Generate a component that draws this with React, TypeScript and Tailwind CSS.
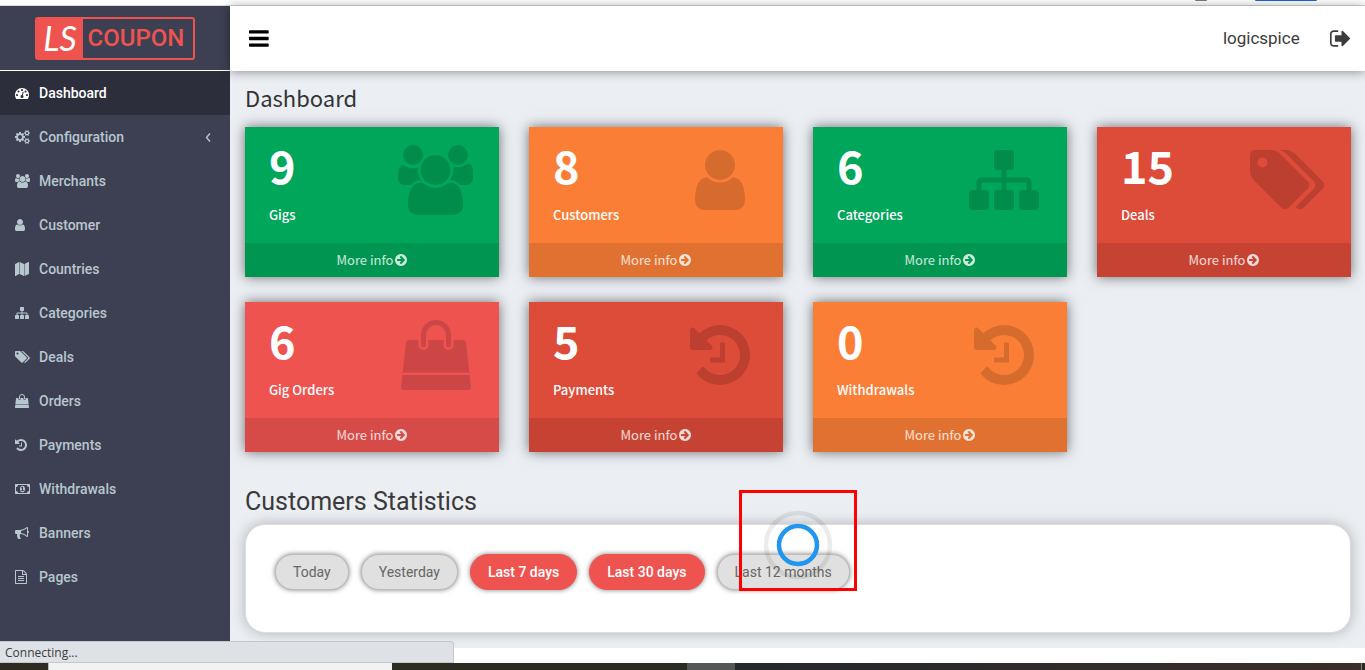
import React from "react";

type Glyph = { box: string; w: number; d: string };

const glyphs = {
  bars: {
    box: "128 0 1536 1792",
    w: 1536,
    d: "M1664 1344v128q0 26-19 45t-45 19h-1408q-26 0-45-19t-19-45v-128q0-26 19-45t45-19h1408q26 0 45 19t19 45zm0-512v128q0 26-19 45t-45 19h-1408q-26 0-45-19t-19-45v-128q0-26 19-45t45-19h1408q26 0 45 19t19 45zm0-512v128q0 26-19 45t-45 19h-1408q-26 0-45-19t-19-45v-128q0-26 19-45t45-19h1408q26 0 45 19t19 45z",
  },
  signOut: {
    box: "64 0 1664 1792",
    w: 1664,
    d: "M704 1440q0 4 1 20t.5 26.5-3 23.5-10 19.5-20.5 6.5h-320q-119 0-203.5-84.5t-84.5-203.5v-704q0-119 84.5-203.5t203.5-84.5h320q13 0 22.5 9.5t9.5 22.5q0 4 1 20t.5 26.5-3 23.5-10 19.5-20.5 6.5h-320q-66 0-113 47t-47 113v704q0 66 47 113t113 47h312l11.5 1 11.5 3 8 5.5 7 9 2 13.5zm928-544q0 26-19 45l-544 544q-19 19-45 19t-45-19-19-45v-288h-448q-26 0-45-19t-19-45v-384q0-26 19-45t45-19h448v-288q0-26 19-45t45-19 45 19l544 544q19 19 19 45z",
  },
  gauge: {
    box: "0 0 1792 1792",
    w: 1792,
    d: "M384 1152q0-53-37.5-90.5t-90.5-37.5-90.5 37.5-37.5 90.5 37.5 90.5 90.5 37.5 90.5-37.5 37.5-90.5zm192-448q0-53-37.5-90.5t-90.5-37.5-90.5 37.5-37.5 90.5 37.5 90.5 90.5 37.5 90.5-37.5 37.5-90.5zm428 481l101-382q6-26-7.5-48.5t-38.5-29.5-48 6.5-30 39.5l-101 382q-60 5-107 43.5t-63 98.5q-20 77 20 146t117 89 146-20 89-117q16-60-6-117t-72-91zm660-33q0-53-37.5-90.5t-90.5-37.5-90.5 37.5-37.5 90.5 37.5 90.5 90.5 37.5 90.5-37.5 37.5-90.5zm-640-640q0-53-37.5-90.5t-90.5-37.5-90.5 37.5-37.5 90.5 37.5 90.5 90.5 37.5 90.5-37.5 37.5-90.5zm448 192q0-53-37.5-90.5t-90.5-37.5-90.5 37.5-37.5 90.5 37.5 90.5 90.5 37.5 90.5-37.5 37.5-90.5zm320 448q0 261-141 483-19 29-54 29h-1402q-35 0-54-29-141-221-141-483 0-182 71-348t191-286 286-191 348-71 348 71 286 191 191 286 71 348z",
  },
  cogs: {
    box: "-64 0 1920 1792",
    w: 1920,
    d: "M832 896q0-106-75-181t-181-75-181 75-75 181 75 181 181 75 181-75 75-181zm768 512q0-52-38-90t-90-38-90 38-38 90q0 53 37.5 90.5t90.5 37.5 90.5-37.5 37.5-90.5zm0-1024q0-52-38-90t-90-38-90 38-38 90q0 53 37.5 90.5t90.5 37.5 90.5-37.5 37.5-90.5zm-384 421v185q0 10-7 19.5t-16 10.5l-155 24q-11 35-32 76 34 48 90 115 7 11 7 20 0 12-7 19-23 30-82.5 89.5t-78.5 59.5q-11 0-21-7l-115-90q-37 19-77 31-11 108-23 155-7 24-30 24h-186q-11 0-20-7.5t-10-17.5l-23-153q-34-10-75-31l-118 89q-7 7-20 7-11 0-21-8-144-133-144-160 0-9 7-19 10-14 41-53t47-61q-23-44-35-82l-152-24q-10-1-17-9.5t-7-19.5v-185q0-10 7-19.5t16-10.5l155-24q11-35 32-76-34-48-90-115-7-11-7-20 0-12 7-20 22-30 82-89t79-59q11 0 21 7l115 90q34-18 77-32 11-108 23-154 7-24 30-24h186q11 0 20 7.5t10 17.5l23 153q34 10 75 31l118-89q8-7 20-7 11 0 21 8 144 133 144 160 0 8-7 19-12 16-42 54t-45 60q23 48 34 82l152 23q10 2 17 10.5t7 19.5zm640 533v140q0 16-149 31-12 27-30 52 51 113 51 138 0 4-4 7-122 71-124 71-8 0-46-47t-52-68q-20 2-30 2t-30-2q-14 21-52 68t-46 47q-2 0-124-71-4-3-4-7 0-25 51-138-18-25-30-52-149-15-149-31v-140q0-16 149-31 13-29 30-52-51-113-51-138 0-4 4-7 4-2 35-20t59-34 30-16q8 0 46 46.5t52 67.5q20-2 30-2t30 2q51-71 92-112l6-2q4 0 124 70 4 3 4 7 0 25-51 138 17 23 30 52 149 15 149 31zm0-1024v140q0 16-149 31-12 27-30 52 51 113 51 138 0 4-4 7-122 71-124 71-8 0-46-47t-52-68q-20 2-30 2t-30-2q-14 21-52 68t-46 47q-2 0-124-71-4-3-4-7 0-25 51-138-18-25-30-52-149-15-149-31v-140q0-16 149-31 13-29 30-52-51-113-51-138 0-4 4-7 4-2 35-20t59-34 30-16q8 0 46 46.5t52 67.5q20-2 30-2t30 2q51-71 92-112l6-2q4 0 124 70 4 3 4 7 0 25-51 138 17 23 30 52 149 15 149 31z",
  },
  users: {
    box: "-64 0 1920 1792",
    w: 1920,
    d: "M529 896q-162 5-265 128h-134q-82 0-138-40.5t-56-118.5q0-353 124-353 6 0 43.5 21t97.5 42.5 119 21.5q67 0 133-23-5 37-5 66 0 159 93 287zm1071 637q0 120-73 189.5t-194 69.5h-874q-121 0-194-69.5t-73-189.5q0-53 3.5-103.5t14-109 26.5-108.5 43-97.5 62-81 85.5-53.5 111.5-20q10 0 43 21.5t73 48 107 48 135 21.5 135-21.5 107-48 73-48 43-21.5q61 0 111.5 20t85.5 53.5 62 81 43 97.5 26.5 108.5 14 109 3.5 103.5zm-1024-1277q0 106-75 181t-181 75-181-75-75-181 75-181 181-75 181 75 75 181zm704 384q0 159-112.5 271.5t-271.5 112.5-271.5-112.5-112.5-271.5 112.5-271.5 271.5-112.5 271.5 112.5 112.5 271.5zm576 225q0 78-56 118.5t-138 40.5h-134q-103-123-265-128 93-128 93-287 0-29-5-66 66 23 133 23 59 0 119-21.5t97.5-42.5 43.5-21q124 0 124 353zm-128-609q0 106-75 181t-181 75-181-75-75-181 75-181 181-75 181 75 75 181z",
  },
  user: {
    box: "256 0 1280 1792",
    w: 1280,
    d: "M1536 1399q0 109-62.5 187t-150.5 78h-854q-88 0-150.5-78t-62.5-187q0-85 8.5-160.5t31.5-152 58.5-131 94-89 134.5-34.5q131 128 313 128t313-128q76 0 134.5 34.5t94 89 58.5 131 31.5 152 8.5 160.5zm-256-887q0 159-112.5 271.5t-271.5 112.5-271.5-112.5-112.5-271.5 112.5-271.5 271.5-112.5 271.5 112.5 112.5 271.5z",
  },
  map: {
    box: "0 0 1792 1792",
    w: 1792,
    d: "M512 0v1536l-426 250q-36 14-62 0t-24-58v-1408q0-40 32-60zM576 0l576 256v1536l-576-256zM1706 6q36-14 62 0t24 58v1408q0 40-32 60l-544 260v-1536z",
  },
  sitemap: {
    box: "0 0 1792 1792",
    w: 1792,
    d: "M1792 1248v320q0 40-28 68t-68 28h-320q-40 0-68-28t-28-68v-320q0-40 28-68t68-28h96v-192h-512v192h96q40 0 68 28t28 68v320q0 40-28 68t-68 28h-320q-40 0-68-28t-28-68v-320q0-40 28-68t68-28h96v-192h-512v192h96q40 0 68 28t28 68v320q0 40-28 68t-68 28h-320q-40 0-68-28t-28-68v-320q0-40 28-68t68-28h96v-192q0-52 38-90t90-38h512v-192h-96q-40 0-68-28t-28-68v-320q0-40 28-68t68-28h320q40 0 68 28t28 68v320q0 40-28 68t-68 28h-96v192h512q52 0 90 38t38 90v192h96q40 0 68 28t28 68z",
  },
  tags: {
    box: "-64 0 1920 1792",
    w: 1920,
    d: "M384 448q0-53-37.5-90.5t-90.5-37.5-90.5 37.5-37.5 90.5 37.5 90.5 90.5 37.5 90.5-37.5 37.5-90.5zm1067 576q0 53-37 90l-491 492q-39 37-91 37-53 0-90-37l-715-716q-38-37-64.5-101t-26.5-117v-416q0-52 38-90t90-38h416q53 0 117 26.5t102 64.5l715 714q37 39 37 91zm384 0q0 53-37 90l-491 492q-39 37-91 37-36 0-59-14t-53-45l470-470q37-37 37-90 0-52-37-91l-715-714q-38-38-102-64.5t-117-26.5h224q53 0 117 26.5t102 64.5l715 714q37 39 37 91z",
  },
  bag: {
    box: "0 0 1792 1792",
    w: 1792,
    d: "M1757 1408l35 313q3 28-16 50-19 21-48 21h-1664q-29 0-48-21-19-22-16-50l35-313h1722zm-93-839l86 775h-1708l86-775q3-24 21-40.5t43-16.5h256v128q0 53 37.5 90.5t90.5 37.5 90.5-37.5 37.5-90.5v-128h384v128q0 53 37.5 90.5t90.5 37.5 90.5-37.5 37.5-90.5v-128h256q25 0 43 16.5t21 40.5zm-384-185v256q0 26-19 45t-45 19-45-19-19-45v-256q0-106-75-181t-181-75-181 75-75 181v256q0 26-19 45t-45 19-45-19-19-45v-256q0-159 112.5-271.5t271.5-112.5 271.5 112.5 112.5 271.5z",
  },
  history: {
    box: "128 0 1536 1792",
    w: 1536,
    d: "M1664 896q0 156-61 298t-164 245-245 164-298 61q-172 0-327-72.5t-264-204.5q-7-10-6.5-22.5t8.5-20.5l137-138q10-9 25-9 16 2 23 12 73 95 179 147t225 52q104 0 198.5-40.5t163.5-109.5 109.5-163.5 40.5-198.5-40.5-198.5-109.5-163.5-163.5-109.5-198.5-40.5q-98 0-188 35.5t-160 101.5l137 138q31 30 14 69-17 40-59 40h-448q-26 0-45-19t-19-45v-448q0-42 40-59 39-17 69 14l130 129q107-101 244.5-156.5t284.5-55.5q156 0 298 61t245 164 164 245 61 298zm-640-288v448q0 14-9 23t-23 9h-320q-14 0-23-9t-9-23v-64q0-14 9-23t23-9h224v-352q0-14 9-23t23-9h64q14 0 23 9t9 23z",
  },
  money: {
    box: "-64 0 1920 1792",
    w: 1920,
    d: "M704 1152h384v-96h-128v-448h-114l-148 137 77 80q42-37 55-57h2v288h-128v96zm512-256q0 70-21 142t-59.5 134-101.5 101-138 39-138-39-101.5-101-59.5-134-21-142 21-142 59.5-134 101.5-101 138-39 138 39 101.5 101 59.5 134 21 142zm512 256v-512q-106 0-181-75t-75-181h-1152q0 106-75 181t-181 75v512q106 0 181 75t75 181h1152q0-106 75-181t181-75zm128-832v1152q0 26-19 45t-45 19h-1792q-26 0-45-19t-19-45v-1152q0-26 19-45t45-19h1792q26 0 45 19t19 45z",
  },
  bullhorn: {
    box: "0 0 1792 1792",
    w: 1792,
    d: "M1664 640q53 0 90.5 37.5t37.5 90.5-37.5 90.5-90.5 37.5v384q0 52-38 90t-90 38q-417-347-812-380-58 19-91 66t-31 100.5 40 92.5q-20 33-23 65.5t6 58 33.5 55 48 50 61.5 50.5q-29 58-111.5 83t-168.5 11.5-132-55.5q-7-23-29.5-87.5t-32-94.5-23-89-15-101 3.5-98.5 22-110.5h-122q-66 0-113-47t-47-113v-192q0-66 47-113t113-47h480q435 0 896-384 52 0 90 38t38 90v384zm-128 604v-954q-394 302-768 343v270q377 42 768 341z",
  },
  fileText: {
    box: "128 0 1536 1792",
    w: 1536,
    d: "M1596 380q28 28 48 76t20 88v1152q0 40-28 68t-68 28h-1344q-40 0-68-28t-28-68v-1600q0-40 28-68t68-28h896q40 0 88 20t76 48zm-444-244v376h376q-10-29-22-41l-313-313q-12-12-41-22zm384 1528v-1024h-416q-40 0-68-28t-28-68v-416h-768v1536h1280zm-1024-864q0-14 9-23t23-9h704q14 0 23 9t9 23v64q0 14-9 23t-23 9h-704q-14 0-23-9t-9-23v-64zm736 224q14 0 23 9t9 23v64q0 14-9 23t-23 9h-704q-14 0-23-9t-9-23v-64q0-14 9-23t23-9h704zm0 256q14 0 23 9t9 23v64q0 14-9 23t-23 9h-704q-14 0-23-9t-9-23v-64q0-14 9-23t23-9h704z",
  },
  arrowCircle: {
    box: "128 0 1536 1792",
    w: 1536,
    d: "M1413 896q0-27-18-45l-362-362-91-91q-18-18-45-18t-45 18l-91 91q-18 18-18 45t18 45l189 189h-502q-26 0-45 19t-19 45v128q0 26 19 45t45 19h502l-189 189q-18 18-18 45t18 45l91 91q18 18 45 18t45-18l91-91 362-362q18-18 18-45zm251 0q0 209-103 385.5t-279.5 279.5-385.5 103-385.5-103-279.5-279.5-103-385.5 103-385.5 279.5-279.5 385.5-103 385.5 103 279.5 279.5 103 385.5z",
  },
} satisfies Record<string, Glyph>;

type IconName = keyof typeof glyphs;

function Icon({ name, size, className = "" }: { name: IconName; size: number; className?: string }) {
  const g = glyphs[name];
  return (
    <svg
      aria-hidden="true"
      viewBox={g.box}
      width={(size * g.w) / 1792}
      height={size}
      fill="currentColor"
      className={`shrink-0 ${className}`}
    >
      <path d={g.d} />
    </svg>
  );
}

const menu: { label: string; icon: IconName; active?: boolean; nested?: boolean }[] = [
  { label: "Dashboard", icon: "gauge", active: true },
  { label: "Configuration", icon: "cogs", nested: true },
  { label: "Merchants", icon: "users" },
  { label: "Customer", icon: "user" },
  { label: "Countries", icon: "map" },
  { label: "Categories", icon: "sitemap" },
  { label: "Deals", icon: "tags" },
  { label: "Orders", icon: "bag" },
  { label: "Payments", icon: "history" },
  { label: "Withdrawals", icon: "money" },
  { label: "Banners", icon: "bullhorn" },
  { label: "Pages", icon: "fileText" },
];

const cards: { value: number; label: string; icon: IconName; color: string }[] = [
  { value: 9, label: "Gigs", icon: "users", color: "bg-[#00a65a]" },
  { value: 8, label: "Customers", icon: "user", color: "bg-[#fb7e36]" },
  { value: 6, label: "Categories", icon: "sitemap", color: "bg-[#00a65a]" },
  { value: 15, label: "Deals", icon: "tags", color: "bg-[#dd4b39]" },
  { value: 6, label: "Gig Orders", icon: "bag", color: "bg-[#ef5350]" },
  { value: 5, label: "Payments", icon: "history", color: "bg-[#dd4b39]" },
  { value: 0, label: "Withdrawals", icon: "history", color: "bg-[#fb7e36]" },
];

const ranges = [
  { label: "Today", on: false },
  { label: "Yesterday", on: false },
  { label: "Last 7 days", on: true },
  { label: "Last 30 days", on: true },
  { label: "Last 12 months", on: false },
];

function Logo() {
  return (
    <a
      href="#home"
      className="flex h-[43px] w-40 overflow-hidden rounded-[3px] border-2 border-[#ef5350] text-[#ef5350]"
    >
      <span className="flex w-[46px] items-center justify-center bg-[#ef5350] font-['Lato'] text-[34px] leading-none text-white italic">
        LS
      </span>
      <span className="flex flex-1 items-center justify-center pr-1 font-['Roboto'] text-[24px] leading-none font-medium">
        COUPON
      </span>
    </a>
  );
}

function Sidebar() {
  return (
    <aside className="w-[230px] shrink-0 bg-[#3c4052]">
      <div className="flex h-[65px] items-center justify-center border-b border-white">
        <Logo />
      </div>
      <nav>
        {menu.map((m) => (
          <a
            key={m.label}
            href={`#${m.label.toLowerCase()}`}
            className={`flex h-11 items-center px-[15px] text-sm font-medium ${
              m.active ? "bg-[#2d2e3b] text-white" : "text-[#b8c7ce]"
            }`}
          >
            <span className="flex w-6">
              <Icon name={m.icon} size={14} />
            </span>
            <span className="flex-1">{m.label}</span>
            {m.nested && (
              <svg width="14" height="14" viewBox="0 0 14 14" fill="none" stroke="currentColor" strokeWidth="1.4">
                <path d="M9 3.500 5.500 7.500 9 11.500" />
              </svg>
            )}
          </a>
        ))}
      </nav>
    </aside>
  );
}

function StatCard({ value, label, icon, color }: (typeof cards)[number]) {
  return (
    <article
      className={`font-['Noto_Sans_CJK_SC',sans-serif] text-white shadow-[0_0_12px_rgba(0,0,0,0.55)] ${color}`}
    >
      <div className="flex h-[116px] justify-between pt-[14px] pr-[26px] pl-6">
        <div>
          <p className="text-[45px] leading-12 font-bold">{value}</p>
          <p className="mt-4 text-[13px] leading-5 font-medium">{label}</p>
        </div>
        <span className="flex w-[75px] justify-center pt-1 text-black/15">
          <Icon name={icon} size={70} />
        </span>
      </div>
      <a
        href={`#${label.toLowerCase().replace(" ", "-")}`}
        className="flex h-[34px] items-center justify-center gap-[2px] bg-black/10 text-[13px] leading-5 text-white/80"
      >
        More info
        <Icon name="arrowCircle" size={14} />
      </a>
    </article>
  );
}

function BusyMarker() {
  return (
    <div className="pointer-events-none absolute -top-[35px] left-[493px] flex h-[101px] w-[118px] items-center justify-center border-3 border-[#fe0000]">
      <svg width="70" height="70" viewBox="0 0 70 70" fill="none" aria-hidden="true" className="mt-2">
        <circle cx="35" cy="35" r="32" stroke="#000" strokeOpacity="0.08" strokeWidth="4.500" />
        <circle cx="35" cy="35" r="19" stroke="#2196ee" strokeWidth="4.500" />
      </svg>
    </div>
  );
}

export default function App() {
  return (
    <div className="relative flex min-h-screen flex-col bg-white font-['Roboto',sans-serif]">
      <div className="flex h-[6px] items-start justify-end gap-12 border-b border-[#d8dade] pr-12">
        <span className="h-px w-3 rounded-b bg-[#7a7484]" />
        <span className="h-px w-[62px] rounded-b bg-[#1a66d0]" />
      </div>

      <div className="flex flex-1">
        <Sidebar />
        <div className="flex min-w-0 flex-1 flex-col bg-[#ebeef3]">
          <header className="z-10 flex h-[65px] items-center justify-between bg-white pr-[14px] pl-[19px] shadow-[0_1px_10px_rgba(0,0,0,0.4)]">
            <button type="button" aria-label="Toggle menu" className="text-black">
              <Icon name="bars" size={23} />
            </button>
            <div className="flex items-center gap-[30px] text-[#3c3c3c]">
              <a href="#account" className="text-[17px]">
                logicspice
              </a>
              <a href="#logout" aria-label="Sign out">
                <Icon name="signOut" size={23} />
              </a>
            </div>
          </header>

          <main className="flex-1 pt-[10px] pr-[14px] pl-[15px]">
            <h1 className="font-['Noto_Sans_CJK_SC',sans-serif] text-[22px] leading-8 text-[#333]">Dashboard</h1>
            <section className="mt-[14px] grid grid-cols-4 gap-x-[30px] gap-y-[25px]">
              {cards.map((c) => (
                <StatCard key={c.label} {...c} />
              ))}
            </section>

            <h2 className="mt-[34px] text-[25px] leading-8 text-[#3a3a3a]">Customers Statistics</h2>
            <section className="relative mt-[6px] min-h-[109px] rounded-[20px] border border-[#dcdcdc] bg-white px-[29px] py-[29px] shadow-[0_0_14px_rgba(0,0,0,0.25)]">
              <div className="flex gap-3">
                {ranges.map((r) => (
                  <button
                    key={r.label}
                    type="button"
                    className={`h-9 rounded-full border px-[17px] text-sm shadow-[0_0_5px_rgba(0,0,0,0.5)] ${
                      r.on
                        ? "border-[#ef5350] bg-[#ef5350] font-medium text-white"
                        : "border-[#bcbcbc] bg-[#e0e0e0] text-[#666]"
                    }`}
                  >
                    {r.label}
                  </button>
                ))}
              </div>
              <BusyMarker />
            </section>
          </main>
        </div>
      </div>

      <div className="h-[15px] bg-white" />
      <div className="flex h-[7px] bg-[#2b2820]">
        <span className="w-12 bg-[#302b21]" />
        <span className="w-[344px] border-l border-[#bbb] bg-[#f2f2f2]" />
        <span className="w-[295px] bg-[#2d2c20]" />
        <span className="w-12 bg-[#555656]" />
        <span className="flex-1 bg-linear-to-r from-[#24282c] to-[#3c2e28]" />
        <span className="mr-[3px] w-px bg-[#8a817c]" />
      </div>
      <div
        role="status"
        className="absolute bottom-[7px] left-0 flex h-[22px] w-[454px] items-center rounded-tr-[4px] border-t border-r border-b border-[#c4c7cb] bg-[#dee1e6] pt-px pl-[5px] font-['Open_Sans',sans-serif] text-xs text-[#3c3c3c]"
      >
        Connecting...
      </div>
    </div>
  );
}
